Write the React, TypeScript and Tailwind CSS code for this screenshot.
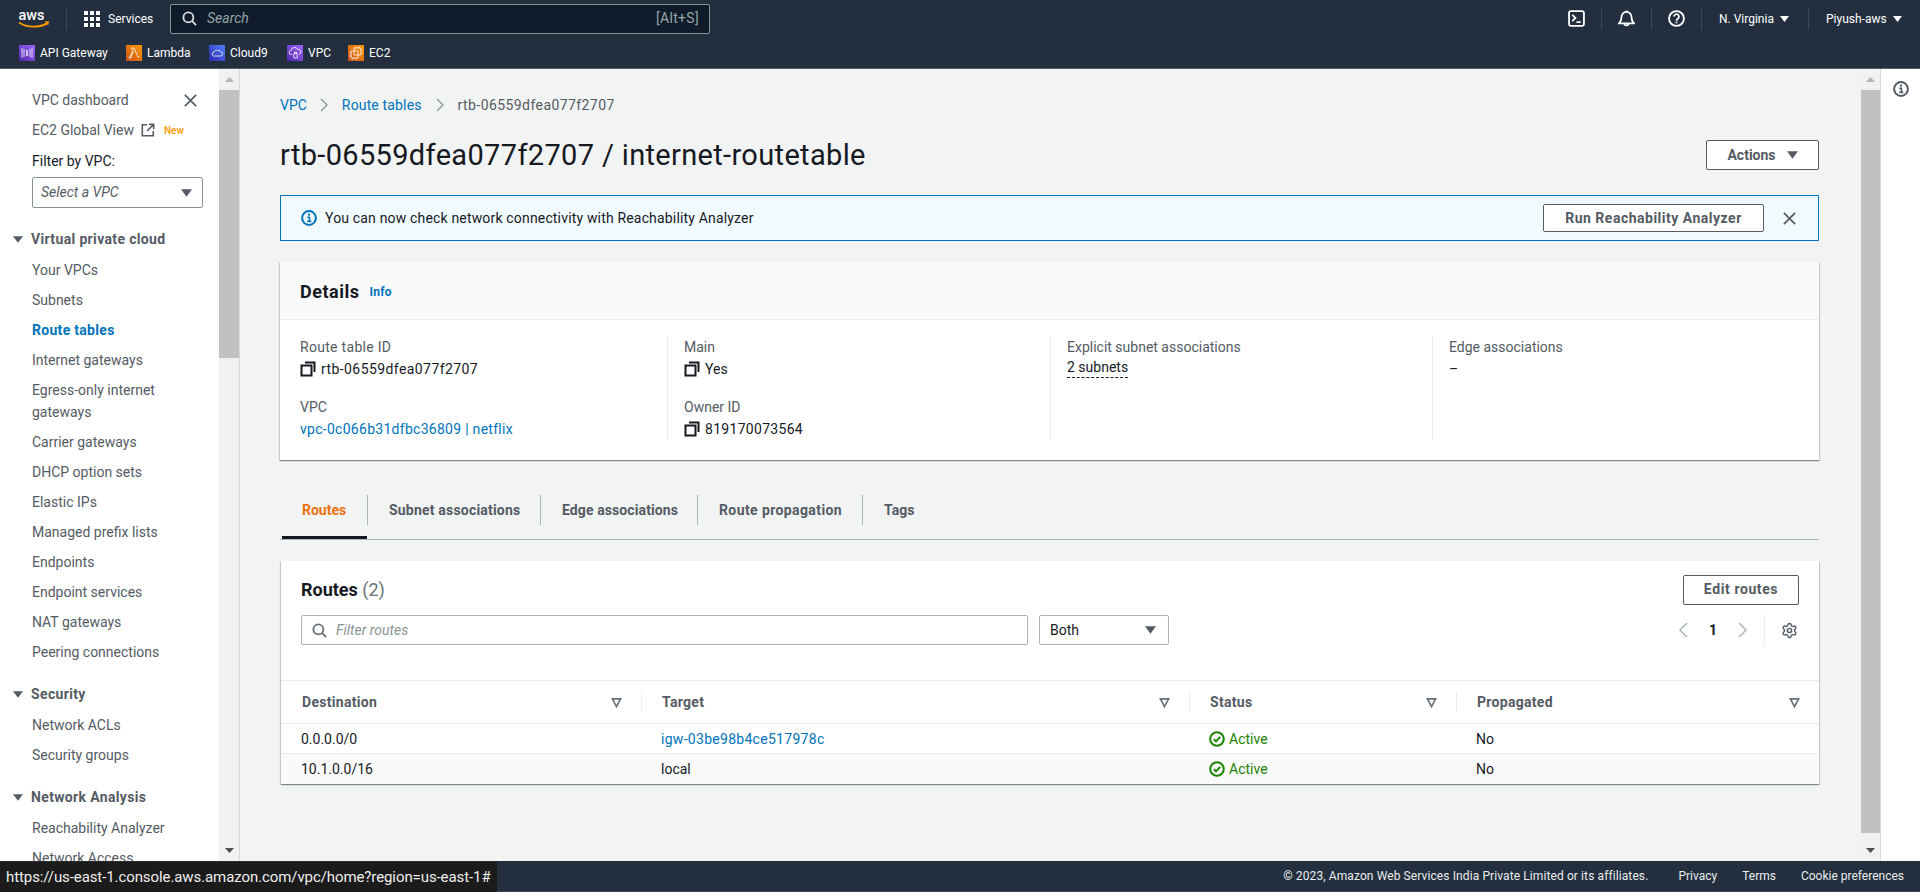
import React from "react";
import { Settings } from "lucide-react";

const Caret = ({ className = "" }: { className?: string }) => (
  <svg viewBox="0 0 12 8" className={className} fill="currentColor"><path d="M0 0h12L6 8z" /></svg>
);
const CloseX = ({ size = 16, stroke = "#545b64" }: { size?: number; stroke?: string }) => (
  <svg width={size} height={size} viewBox="0 0 16 16" fill="none" stroke={stroke} strokeWidth="1.8"><path d="M2 2l12 12M14 2L2 14" /></svg>
);
const Copy = () => (
  <svg width="16" height="16" viewBox="0 0 16 16" fill="none" stroke="#16191f" strokeWidth="2" className="shrink-0">
    <rect x="1.5" y="4.5" width="10" height="10" fill="#fff" />
    <path d="M5 1.5h9.5V11" />
  </svg>
);
const FilterTri = () => (
  <svg width="11" height="11" viewBox="0 0 12 12" fill="none" stroke="#687078" strokeWidth="1.8"><path d="M1.5 2h9L6 10.5z" /></svg>
);
const ActiveIcon = () => (
  <svg width="16" height="16" viewBox="0 0 16 16" fill="none" stroke="#1d8102" strokeWidth="2" className="shrink-0">
    <circle cx="8" cy="8" r="6.8" /><path d="M4.8 8.2l2.2 2.2 4.2-4.6" />
  </svg>
);
const InfoIcon = ({ color, size = 16 }: { color: string; size?: number }) => (
  <svg width={size} height={size} viewBox="0 0 16 16" fill="none" className="shrink-0">
    <circle cx="8" cy="8" r="6.9" stroke={color} strokeWidth="2" />
    <rect x="7" y="3.6" width="2" height="2" fill={color} />
    <path d="M6.3 7.2H8.4v4M6.3 11.4h4" stroke={color} strokeWidth="1.6" />
  </svg>
);
const Search = ({ color, size = 16 }: { color: string; size?: number }) => (
  <svg width={size} height={size} viewBox="0 0 16 16" fill="none" stroke={color} strokeWidth="2" className="shrink-0">
    <circle cx="6.8" cy="6.8" r="5.3" /><path d="M10.6 10.6L15 15" />
  </svg>
);

const AwsLogo = () => (
  <svg width="33" height="21" viewBox="0 0 33 21" className="shrink-0 overflow-visible">
    <text x="0.5" y="12" fill="#fff" fontFamily="Roboto, sans-serif" fontSize="14.5" fontWeight="500">aws</text>
    <path d="M1 14.5c8 5.4 20 5.6 28.5 0.6" fill="none" stroke="#f90" strokeWidth="1.8" />
    <path d="M26.5 13.6l4.6-0.4-1 4.4z" fill="#f90" />
  </svg>
);

const Svc = ({ from, to, children }: { from: string; to: string; children: React.ReactNode }) => (
  <svg width="16" height="16" viewBox="0 0 16 16" className="shrink-0">
    <defs>
      <linearGradient id={from + to} x1="0" y1="1" x2="1" y2="0">
        <stop offset="0" stopColor={from} /><stop offset="1" stopColor={to} />
      </linearGradient>
    </defs>
    <rect width="16" height="16" fill={`url(#${from + to})`} />
    <g fill="none" stroke="#fff" strokeWidth="0.8">{children}</g>
  </svg>
);

const services = [
  { name: "API Gateway", w: "w-[107px]", from: "#4d27a8", to: "#a166ff", g: <path d="M3 3v10M5 4v8M11 4v8M13 3v10M7 5l1.5 3L7 11M9 5L7.5 8 9 11" /> },
  { name: "Lambda", w: "w-[83px]", from: "#c8511b", to: "#ff9900", g: <path d="M3 13l4-7-1.5-3H8l4 9h1.5M7 6.5L5 13H3" /> },
  { name: "Cloud9", w: "w-[78px]", from: "#2e27ad", to: "#527fff", g: <path d="M4.5 11h7a2 2 0 0 0 .3-4 2.6 2.6 0 0 0-3.2-1.6A2.6 2.6 0 0 0 5 7.3 1.9 1.9 0 0 0 4.5 11z" /> },
  { name: "VPC", w: "w-[61px]", from: "#4d27a8", to: "#a166ff", g: <path d="M5 9.5H4a2 2 0 0 1 .2-4A3.3 3.3 0 0 1 10.5 4.4 2.5 2.5 0 0 1 12 9.4M6.8 13V8.6h3.4V13zM7.5 8.6V7.2h2v1.4" /> },
  { name: "EC2", w: "w-auto", from: "#c8511b", to: "#ff9900", g: <path d="M6 3h7v7H6zM3 6h7v7H3zM8 1.5V3M11 1.5V3M14.500 5H13M14.500 8H13M1.500 8H3M1.500 11H3M5 13v1.500M8 13v1.500" /> },
];

const Divider = () => <div className="h-[22px] w-px bg-[#414750]" />;

function TopNav() {
  return (
    <header className="h-[69px] shrink-0 bg-[#232f3e] border-b border-[#545b64] text-white">
      <div className="h-[37px] flex items-center">
        <div className="w-[66px] pl-[18px] flex items-center"><AwsLogo /></div>
        <Divider />
        <div className="w-[103px] pl-[17px] flex items-center gap-2">
          <svg width="16" height="16" viewBox="0 0 16 16" fill="#fff" className="shrink-0">
            {[0, 6, 12].flatMap((x) => [0, 6, 12].map((y) => <rect key={`${x}${y}`} x={x} y={y} width="4" height="4" />))}
          </svg>
          <span className="text-[12px]">Services</span>
        </div>
        <div className="h-[30px] w-[540px] bg-[#0f1b2a] border border-[#879596] rounded-[2px] flex items-center pl-[11px] pr-[10px]">
          <Search color="#d5dbdb" size={15} />
          <span className="ml-[10px] text-[14px] italic text-[#95a5a6]">Search</span>
          <span className="ml-auto text-[14px] tracking-[0.3px] text-[#95a5a6]">[Alt+S]</span>
        </div>
        <div className="ml-auto flex items-center h-full">
          <div className="w-[50px] flex justify-center">
            <svg width="17" height="17" viewBox="0 0 16 16" fill="none" stroke="#fff" strokeWidth="1.7"><rect x="1" y="1" width="14" height="14" rx="1.5" /><path d="M4 4.500l3 3-3 3M8 11.500h4" /></svg>
          </div>
          <Divider />
          <div className="w-[49px] flex justify-center">
            <svg width="17" height="17" viewBox="0 0 16 16" fill="none" stroke="#fff" strokeWidth="1.7"><path d="M1 12.500h14c-2-2-2.300-3-2.300-6a4.700 4.700 0 0 0-9.400 0c0 3-.3 4-2.300 6z" /><path d="M6 12.500a2 2 0 0 0 4 0M8 .5v1.500" /></svg>
          </div>
          <Divider />
          <div className="w-[49px] flex justify-center">
            <svg width="17" height="17" viewBox="0 0 16 16" fill="none" stroke="#fff" strokeWidth="1.7"><circle cx="8" cy="8" r="7" /><path d="M5.700 6.200a2.300 2.300 0 1 1 3.500 2c-.8.5-1.200 1-1.200 1.800" /><path d="M8 11v1.500" /></svg>
          </div>
          <Divider />
          <div className="w-[106px] pl-[17px] flex items-center text-[12px]">
            <span>N. Virginia</span><Caret className="w-[9px] h-[6px] ml-[6px]" />
          </div>
          <Divider />
          <div className="w-[111px] pl-[17px] flex items-center text-[12px]">
            <span>Piyush-aws</span><Caret className="w-[9px] h-[6px] ml-[6px]" />
          </div>
        </div>
      </div>
      <div className="h-[31px] pl-[19px] flex items-center text-[12px]">
        {services.map((s) => (
          <div key={s.name} className={`${s.w} flex items-center gap-[5px]`}>
            <Svc from={s.from} to={s.to}>{s.g}</Svc>
            <span>{s.name}</span>
          </div>
        ))}
      </div>
    </header>
  );
}

const NavLink = ({ label, active }: { label: string; active?: boolean }) => (
  <div className={`pl-8 pr-6 py-[4px] text-[14px] leading-[22px] ${active ? "font-bold tracking-[0.3px] text-[#0073bb]" : "text-[#545b64]"}`}>{label}</div>
);
const NavHead = ({ label }: { label: string }) => (
  <div className="flex items-center pl-[13px] h-[22px] text-[14px] font-bold tracking-[0.35px] text-[#545b64]">
    <Caret className="w-[10px] h-[7px] mr-[8px] text-[#545b64]" />{label}
  </div>
);

function Sidebar() {
  return (
    <aside className="w-[219px] shrink-0 bg-white overflow-hidden pt-[20px]">
      <div className="pl-8 pr-[21px] h-[22px] flex items-center justify-between text-[14px] text-[#545b64]">
        <span>VPC dashboard</span><CloseX size={15} />
      </div>
      <div className="pl-8 mt-[8px] h-[22px] flex items-center text-[14px] text-[#545b64]">
        <span>EC2 Global View</span>
        <svg width="14" height="14" viewBox="0 0 16 16" fill="none" stroke="#545b64" strokeWidth="1.8" className="ml-[7px]"><path d="M7 2H1.500v12.500H14V9M9 1.500h5.500V7M14.500 1.500L7 9" /></svg>
        <span className="ml-[9px] text-[10px] font-medium text-[#ff9900]">New</span>
      </div>
      <div className="pl-8 mt-[9px] h-[22px] flex items-center text-[14px] text-[#16191f]">Filter by VPC:</div>
      <div className="ml-8 mt-[5px] w-[171px] h-[31px] border border-[#879596] rounded-[2px] flex items-center pl-[8px] pr-[10px] bg-white">
        <span className="text-[14px] italic text-[#545b64]">Select a VPC</span>
        <Caret className="w-[11px] h-[8px] ml-auto text-[#545b64]" />
      </div>
      <div className="mt-[20px]"><NavHead label="Virtual private cloud" /></div>
      <div className="mt-[5px]">
        {["Your VPCs", "Subnets"].map((l) => <NavLink key={l} label={l} />)}
        <NavLink label="Route tables" active />
        {["Internet gateways", "Egress-only internet gateways", "Carrier gateways", "DHCP option sets", "Elastic IPs", "Managed prefix lists", "Endpoints", "Endpoint services", "NAT gateways", "Peering connections"].map((l) => <NavLink key={l} label={l} />)}
      </div>
      <div className="mt-[16px]"><NavHead label="Security" /></div>
      <div className="mt-[5px]">
        {["Network ACLs", "Security groups"].map((l) => <NavLink key={l} label={l} />)}
      </div>
      <div className="mt-[16px]"><NavHead label="Network Analysis" /></div>
      <div className="mt-[5px]">
        <NavLink label="Reachability Analyzer" />
        <NavLink label="Network Access" />
      </div>
    </aside>
  );
}

const Scrollbar = ({ thumb, className = "" }: { thumb: string; className?: string }) => (
  <div className={`shrink-0 flex flex-col items-center bg-[#f1f1f1] ${className}`}>
    <div className="h-[21px] w-full bg-[#f1f1f1] flex items-center justify-center">
      <svg width="9" height="5" viewBox="0 0 9 5" fill="#b5b5b5"><path d="M4.500 0L9 5H0z" /></svg>
    </div>
    <div className={`w-full bg-[#c1c1c1] ${thumb}`} />
    <div className="mt-auto h-[21px] flex items-center justify-center">
      <svg width="9" height="5" viewBox="0 0 9 5" fill="#505050"><path d="M0 0h9L4.500 5z" /></svg>
    </div>
  </div>
);

const Field = ({ label, labelClass = "", children }: { label: string; labelClass?: string; children: React.ReactNode }) => (
  <div>
    <div className={`text-[14px] leading-[22px] text-[#545b64] ${labelClass}`}>{label}</div>
    <div className="text-[14px] leading-[22px] text-[#16191f] flex items-center gap-[5px]">{children}</div>
  </div>
);

const card = "bg-white shadow-[0_1px_1px_0_rgba(0,28,36,0.3),1px_1px_1px_0_rgba(0,28,36,0.15),-1px_1px_1px_0_rgba(0,28,36,0.15)]";
const btn = "border border-[#545b64] rounded-[2px] bg-white text-[14px] font-bold text-[#545b64] flex items-center justify-center";

function Details() {
  return (
    <section className={`${card} mt-[21px] h-[198px]`}>
      <div className="h-[58px] bg-[#fafafa] border-b border-[#eaeded] pl-[20px] pt-px flex items-center">
        <h2 className="text-[18px] font-bold tracking-[0.5px] text-[#16191f]">Details</h2>
        <span className="ml-[10px] mt-[2px] text-[12px] font-bold tracking-[0.3px] text-[#0073bb]">Info</span>
      </div>
      <div className="grid grid-cols-[387px_383px_382px_1fr] pt-[16px]">
        <div className="pl-[20px] h-[104px] flex flex-col gap-[16px]">
          <Field label="Route table ID" labelClass="tracking-[0.3px]"><Copy /><span className="tracking-[0.42px]">rtb-06559dfea077f2707</span></Field>
          <Field label="VPC"><span className="text-[#0073bb] tracking-[0.28px]">vpc-0c066b31dfbc36809 | netflix</span></Field>
        </div>
        <div className="pl-[16px] h-[104px] border-l border-[#eaeded] flex flex-col gap-[16px]">
          <Field label="Main"><Copy /><span>Yes</span></Field>
          <Field label="Owner ID"><Copy /><span className="tracking-[0.3px]">819170073564</span></Field>
        </div>
        <div className="pl-[16px] h-[104px] border-l border-[#eaeded]">
          <Field label="Explicit subnet associations"><span className="border-b border-dashed border-[#16191f] leading-[19px]">2 subnets</span></Field>
        </div>
        <div className="pl-[16px] h-[104px] border-l border-[#eaeded]">
          <Field label="Edge associations"><span>–</span></Field>
        </div>
      </div>
    </section>
  );
}

function Tabs() {
  const tabs = [
    { l: "Subnet associations", w: "w-[173px]", t: "tracking-[0.2px]" },
    { l: "Edge associations", w: "w-[157px]", t: "tracking-[0.1px]" },
    { l: "Route propagation", w: "w-[165px]", t: "tracking-[0.4px]" },
    { l: "Tags", w: "w-auto", t: "" },
  ];
  return (
    <div className="mt-[35px] h-[45px] border-b border-[#aab7b8] flex items-start pl-[2px]">
      <div className="w-[85px] h-[44px] border-b-[3px] border-[#16191f] pl-[20px] flex items-start">
        <span className="h-[30px] leading-[30px] text-[14px] font-bold text-[#ec7211]">Routes</span>
      </div>
      {tabs.map((t) => (
        <div key={t.l} className={`${t.w} ${t.t} h-[30px] border-l border-[#aab7b8] pl-[21px] leading-[30px] text-[14px] font-bold text-[#545b64]`}>{t.l}</div>
      ))}
    </div>
  );
}

const colCls = "grid grid-cols-[360px_548px_267px_1fr]";
const Th = ({ label, first }: { label: string; first?: boolean }) => (
  <div className="relative h-[42px] flex items-center pl-[21px] pr-[19px]">
    {!first && <div className="absolute left-0 top-[11px] h-[20px] w-px bg-[#eaeded]" />}
    <span className="text-[14px] font-bold tracking-[0.3px] text-[#545b64]">{label}</span>
    <span className="ml-auto flex"><FilterTri /></span>
  </div>
);
const Status = () => (
  <div className="flex items-center gap-[4px] pl-[20px] text-[14px] text-[#1d8102]"><ActiveIcon />Active</div>
);

function Row({ dest, target, link, alt }: { dest: string; target: string; link?: boolean; alt?: boolean }) {
  return (
    <div className={`${colCls} items-center border-t border-[#eaeded] text-[14px] text-[#16191f] ${alt ? "bg-[#fafafa] h-[31px]" : "bg-white h-[30px] pt-px"}`}>
      <div className="pl-[20px]">{dest}</div>
      <div className={`pl-[20px] ${link ? "text-[#0073bb] tracking-[0.29px]" : ""}`}>{target}</div>
      <Status />
      <div className="pl-[20px]">No</div>
    </div>
  );
}

function RoutesCard() {
  return (
    <section className={`${card} mt-[21px] ml-px bg-[#fafafa]`}>
      <div className="h-[120px] border-b border-[#eaeded] pl-[20px] pr-[20px] pt-[14px]">
        <div className="flex items-center h-[29px]">
          <h2 className="text-[18px] font-bold text-[#16191f]">Routes <span className="font-normal text-[#687078]">(2)</span></h2>
          <button className={`${btn} tracking-[0.6px] ml-auto w-[116px] h-[30px]`}>Edit routes</button>
        </div>
        <div className="flex items-center mt-[11px] h-[30px]">
          <div className="w-[727px] h-[30px] bg-white border border-[#aab7b8] rounded-[2px] flex items-center pl-[10px]">
            <Search color="#687078" size={15} />
            <span className="ml-[9px] text-[14px] italic text-[#879596]">Filter routes</span>
          </div>
          <div className="ml-[11px] w-[130px] h-[30px] bg-white border border-[#aab7b8] rounded-[2px] flex items-center pl-[10px] pr-[12px] text-[14px] text-[#16191f]">
            Both<Caret className="w-[11px] h-[8px] ml-auto text-[#545b64]" />
          </div>
          <div className="ml-auto flex items-center h-[30px] text-[14px] font-bold text-[#16191f]">
            <svg width="10" height="16" viewBox="0 0 10 16" fill="none" stroke="#aab7b8" strokeWidth="1.5"><path d="M9 1L2 8l7 7" /></svg>
            <span className="mx-[21px]">1</span>
            <svg width="10" height="16" viewBox="0 0 10 16" fill="none" stroke="#aab7b8" strokeWidth="1.5"><path d="M1 1l7 7-7 7" /></svg>
            <div className="h-[30px] w-px bg-[#eaeded] ml-[16px]" />
            <Settings size={17} color="#545b64" strokeWidth={2} className="ml-[16px] mr-px" />
          </div>
        </div>
      </div>
      <div className={colCls}>
        <Th label="Destination" first /><Th label="Target" /><Th label="Status" /><Th label="Propagated" />
      </div>
      <Row dest="0.0.0.0/0" target="igw-03be98b4ce517978c" link />
      <Row dest="10.1.0.0/16" target="local" alt />
    </section>
  );
}

export default function App() {
  return (
    <div className="relative h-[892px] w-[1920px] overflow-hidden flex flex-col bg-white font-['Roboto',sans-serif]">
      <TopNav />
      <div className="flex-1 min-h-0 flex">
        <Sidebar />
        <Scrollbar thumb="h-[268px]" className="w-[21px] border-r border-[#d5dbdb]" />
        <main className="flex-1 min-w-0 bg-[#f2f3f3] pl-[40px] pr-[42px] pt-[25px] overflow-hidden">
          <nav className="h-[22px] flex items-center text-[14px]">
            <span className="text-[#0073bb]">VPC</span>
            <svg width="9" height="14" viewBox="0 0 9 14" fill="none" stroke="#879596" strokeWidth="1.300" className="mx-[13px]"><path d="M1 1l6 6-6 6" /></svg>
            <span className="text-[#0073bb] tracking-[0.15px]">Route tables</span>
            <svg width="9" height="14" viewBox="0 0 9 14" fill="none" stroke="#879596" strokeWidth="1.300" className="ml-[14px] mr-[13px]"><path d="M1 1l6 6-6 6" /></svg>
            <span className="text-[#545b64] tracking-[0.42px]">rtb-06559dfea077f2707</span>
          </nav>
          <div className="mt-[21px] h-[36px] flex items-center justify-between">
            <h1 className="text-[29px] leading-[36px] tracking-[0.34px] text-[#16191f]">rtb-06559dfea077f2707 / internet-routetable</h1>
            <button className={`${btn} w-[113px] h-[30px] gap-[11px]`}>Actions<Caret className="w-[11px] h-[8px]" /></button>
          </div>
          <div className="mt-[22px] h-[46px] border border-[#0073bb] bg-[#f1faff] flex items-center pl-[20px] pr-[21px]">
            <InfoIcon color="#0073bb" />
            <span className="ml-[8px] text-[14px] tracking-[0.17px] text-[#16191f]">You can now check network connectivity with Reachability Analyzer</span>
            <button className={`${btn} tracking-[0.5px] ml-auto w-[221px] h-[28px]`}>Run Reachability Analyzer</button>
            <span className="ml-[18px] flex"><CloseX size={15} /></span>
          </div>
          <Details />
          <Tabs />
          <RoutesCard />
        </main>
        <Scrollbar thumb="h-[743px]" className="w-[19px]" />
        <aside className="w-[40px] shrink-0 bg-white border-l border-[#d5dbdb] pt-[12px] flex justify-center items-start">
          <InfoIcon color="#545b64" size={16} />
        </aside>
      </div>
      <footer className="h-[31px] shrink-0 bg-[#232f3e] border-b border-[#3a4451] flex items-center justify-end pr-[16px] text-[12px] text-[#eaeded]">
        <span className="tracking-[0.1px]">© 2023, Amazon Web Services India Private Limited or its affiliates.</span>
        <span className="ml-[30px]">Privacy</span>
        <span className="ml-[25px]">Terms</span>
        <span className="ml-[25px]">Cookie preferences</span>
      </footer>
      <div className="absolute left-0 bottom-0 h-[31px] w-[497px] bg-[#1b1b1b] border-t border-[#2a2a2a] pl-[6px] flex items-center text-[15px] tracking-[-0.09px] text-[#eeeeee]">
        https://us-east-1.console.aws.amazon.com/vpc/home?region=us-east-1#
      </div>
    </div>
  );
}
